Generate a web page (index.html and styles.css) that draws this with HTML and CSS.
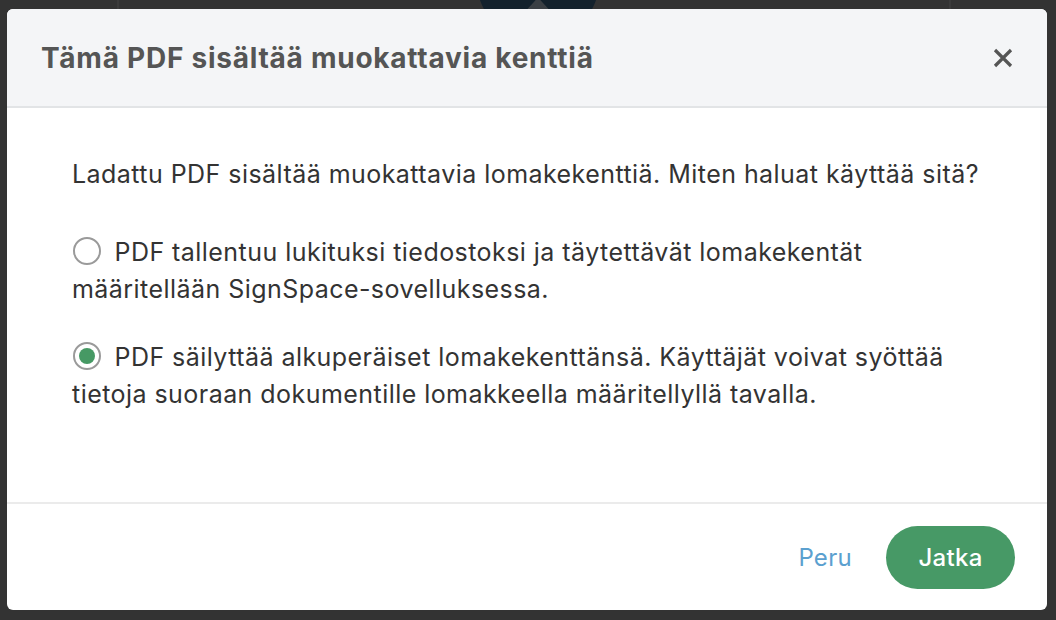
FILE: index.html
```html
<!DOCTYPE html>
<html lang="fi">
<head>
<meta charset="utf-8">
<title>Tämä PDF sisältää muokattavia kenttiä</title>
<link rel="stylesheet" href="styles.css">
</head>
<body>
<div class="backdrop">
  <div class="bg-line bg-line-left"></div>
  <div class="bg-line bg-line-right"></div>
  <div class="bg-circle">
    <svg class="bg-arrow" width="34" height="40" viewBox="0 0 34 40"><path d="M17 2 L4 16 M17 2 L30 16 M17 2 V40" stroke="#3a3f44" stroke-width="6" fill="none" stroke-linecap="round"/></svg>
  </div>
</div>
<div class="modal">
  <header class="modal-header">
    <h2 class="modal-title">Tämä PDF sisältää muokattavia kenttiä</h2>
    <button class="close" aria-label="Sulje">
      <svg width="20" height="20" viewBox="0 0 20 20"><path d="M2 2 L18 18 M18 2 L2 18" stroke="#555" stroke-width="3.2" stroke-linecap="butt"/></svg>
    </button>
  </header>
  <section class="modal-body">
    <p class="intro">Ladattu PDF sisältää muokattavia lomakekenttiä. Miten haluat käyttää sitä?</p>
    <label class="option"><span class="radio"></span> PDF tallentuu lukituksi tiedostoksi ja täytettävät lomakekentät<br>määritellään SignSpace-sovelluksessa.</label>
    <label class="option"><span class="radio checked"></span> PDF säilyttää alkuperäiset lomakekenttänsä. Käyttäjät voivat syöttää<br>tietoja suoraan dokumentille lomakkeella määritellyllä tavalla.</label>
  </section>
  <footer class="modal-footer">
    <button class="btn-link">Peru</button>
    <button class="btn-primary">Jatka</button>
  </footer>
</div>
</body>
</html>
```
FILE: styles.css
```css
html, body {
  margin: 0;
  padding: 0;
}
body {
  width: 1056px;
  height: 620px;
  background: #333333;
  font-family: "Inter", "Liberation Sans", sans-serif;
  position: relative;
  overflow: hidden;
  padding: 9px 9px 10px 7px;
  box-sizing: border-box;
}
.backdrop {
  position: absolute;
  inset: 0;
  z-index: 0;
}
.bg-line {
  position: absolute;
  top: 0;
  width: 2px;
  height: 20px;
  background: #3b3b3b;
}
.bg-line-left { left: 117px; }
.bg-line-right { left: 949px; }
.bg-circle {
  position: absolute;
  left: 477px;
  top: -80px;
  width: 122px;
  height: 122px;
  border-radius: 50%;
  background: #13212c;
}
.bg-arrow {
  position: absolute;
  left: 44px;
  top: 80px;
}
.modal {
  position: relative;
  z-index: 1;
  height: 601px;
  background: #ffffff;
  border-radius: 6px;
  overflow: hidden;
  display: flex;
  flex-direction: column;
}
.modal-header {
  height: 99px;
  box-sizing: border-box;
  background: #f4f5f7;
  border-bottom: 2px solid #e2e4e6;
  display: flex;
  align-items: center;
  justify-content: space-between;
  padding: 0 34px 0 34px;
  flex: none;
}
.modal-title {
  margin: 0;
  font-size: 28px;
  font-weight: 700;
  color: #555555;
  letter-spacing: 0.75px;
}
.close {
  border: 0;
  background: none;
  padding: 0;
  width: 20px;
  height: 20px;
  display: flex;
}
.modal-body {
  flex: 1;
  padding: 48px 40px 0 65px;
  color: #333333;
  font-size: 25px;
  line-height: 37px;
  letter-spacing: 0.45px;
}
.intro {
  margin: 0 0 41px;
}
.option {
  display: block;
  margin-bottom: 31px;
}
.radio {
  display: inline-block;
  width: 24px;
  height: 24px;
  border: 2px solid #9a9a9a;
  border-radius: 50%;
  vertical-align: -4px;
  position: relative;
  margin-left: 1px;
  margin-right: 6px;
}
.radio.checked::after {
  content: "";
  position: absolute;
  left: 4px;
  top: 4px;
  width: 16px;
  height: 16px;
  border-radius: 50%;
  background: #469964;
}
.modal-footer {
  flex: none;
  height: 108px;
  box-sizing: border-box;
  border-top: 2px solid #ebebeb;
  display: flex;
  align-items: center;
  justify-content: flex-end;
  gap: 34px;
  padding: 0 32px 0 0;
}
.btn-link {
  border: 0;
  background: none;
  padding: 0;
  font-family: inherit;
  font-size: 24px;
  letter-spacing: 0.3px;
  color: #5ba0cf;
}
.btn-primary {
  border: 0;
  font-family: inherit;
  font-size: 24px;
  font-weight: 500;
  letter-spacing: 0.3px;
  color: #ffffff;
  background: #479966;
  height: 63px;
  width: 129px;
  border-radius: 32px;
}
```
